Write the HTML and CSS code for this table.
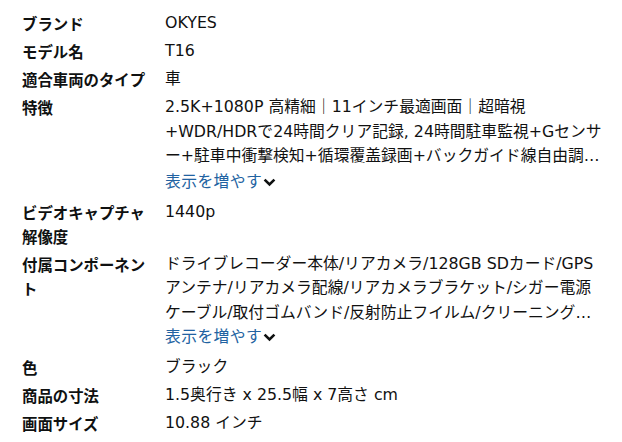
FILE: index.html
```html
<!DOCTYPE html>
<html lang="ja">
<head>
<meta charset="utf-8">
<link rel="stylesheet" href="styles.css">
</head>
<body>
<div class="specs">
  <div class="row">
    <div class="label">ブランド</div>
    <div class="value">OKYES</div>
  </div>
  <div class="row">
    <div class="label">モデル名</div>
    <div class="value">T16</div>
  </div>
  <div class="row">
    <div class="label">適合車両のタイプ</div>
    <div class="value">車</div>
  </div>
  <div class="row">
    <div class="label">特徴</div>
    <div class="value">
      <div class="lines">
        <span class="line">2.5K+1080P 高精細｜11インチ最適画面｜超暗視</span>
        <span class="line">+WDR/HDRで24時間クリア記録, 24時間駐車監視+Gセンサ</span>
        <span class="line">ー+駐車中衝撃検知+循環覆盖録画+バックガイド線自由調…</span>
      </div>
      <a class="more" href="#">表示を増やす<svg class="chev" viewBox="0 0 13 9" width="13" height="9"><path d="M1.6 1.6 L6.5 6.5 L11.4 1.6" fill="none" stroke="#0f1111" stroke-width="2.6"/></svg></a>
    </div>
  </div>
  <div class="row">
    <div class="label">ビデオキャプチャ解像度</div>
    <div class="value">1440p</div>
  </div>
  <div class="row">
    <div class="label">付属コンポーネント</div>
    <div class="value">
      <div class="lines">
        <span class="line">ドライブレコーダー本体/リアカメラ/128GB SDカード/GPS</span>
        <span class="line">アンテナ/リアカメラ配線/リアカメラブラケット/シガー電源</span>
        <span class="line">ケーブル/取付ゴムバンド/反射防止フイルム/クリーニング…</span>
      </div>
      <a class="more more-tight" href="#">表示を増やす<svg class="chev" viewBox="0 0 13 9" width="13" height="9"><path d="M1.6 1.6 L6.5 6.5 L11.4 1.6" fill="none" stroke="#0f1111" stroke-width="2.6"/></svg></a>
    </div>
  </div>
  <div class="row">
    <div class="label">色</div>
    <div class="value">ブラック</div>
  </div>
  <div class="row">
    <div class="label">商品の寸法</div>
    <div class="value">1.5奥行き x 25.5幅 x 7高さ cm</div>
  </div>
  <div class="row">
    <div class="label">画面サイズ</div>
    <div class="value">10.88 インチ</div>
  </div>
</div>
</body>
</html>
```
FILE: styles.css
```css
html, body {
  margin: 0;
  padding: 0;
  background: #ffffff;
}
body {
  font-family: "DejaVu Sans", "Noto Sans CJK JP", sans-serif;
  font-size: 15.8px;
  color: #111111;
}
.specs {
  padding: 11px 22px 0 22px;
  display: flex;
  flex-direction: column;
  gap: 3.6px;
}
.row {
  display: grid;
  grid-template-columns: 128px 450px;
  column-gap: 15px;
  line-height: 24.5px;
}
.label {
  font-family: "Noto Sans CJK JP", sans-serif;
  font-size: 15.4px;
  font-weight: 700;
  line-height: 24px;
  color: #0f1111;
}
.value {
  font-family: "DejaVu Sans", "Noto Sans CJK JP", sans-serif;
}
.lines {
  display: flex;
  flex-direction: column;
}
.line {
  display: block;
  white-space: nowrap;
  height: 24.5px;
}
.more {
  display: inline-flex;
  align-items: center;
  gap: 1px;
  color: #2162a1;
  text-decoration: none;
  margin-bottom: 3.5px;
  letter-spacing: 0.4px;
  font-family: "Noto Sans CJK JP", sans-serif;
}
.more-tight {
  margin-top: -4px;
  margin-bottom: 2.5px;
}
.chev {
  display: block;
  margin-top: 2px;
}
```
